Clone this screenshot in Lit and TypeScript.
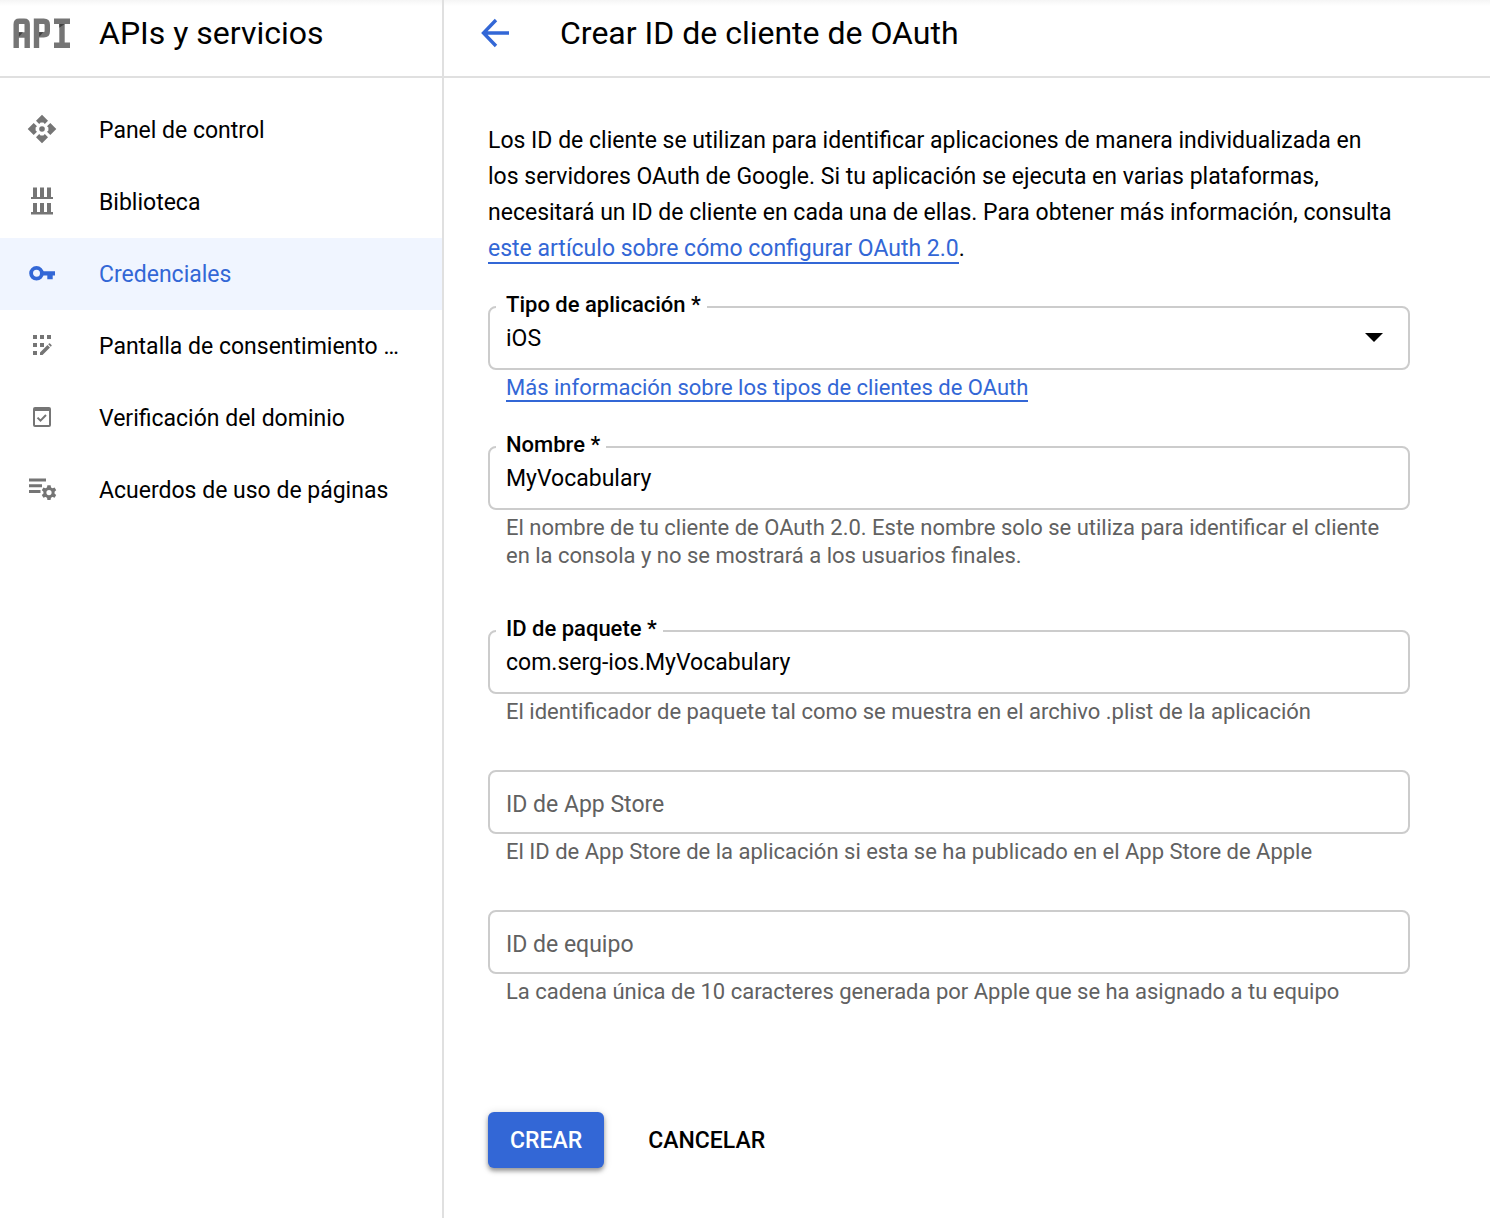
import { LitElement, html, svg, css, nothing, type TemplateResult } from "lit";
import { customElement, property } from "lit/decorators.js";
import { classMap } from "lit/directives/class-map.js";

const arm = "M16 .7L22 6.7L18.8 10L17.4 8.6H14.6L13.200 10L10 6.7Z";

const icons: Record<string, TemplateResult> = {
  dashboard: svg`
    ${[0, 90, 180, 270].map((a) => svg`<path d=${arm} transform="rotate(${a} 16 15)"/>`)}
    <circle cx="16" cy="15" r="2.8"/>`,
  library: svg`
    <path d="M7 1.5h4v9.5h-4zM14 1.5h4v9.5h-4zM21 1.5h4v9.5h-4zM5 11h22v2h-22z"/>
    <path d="M7 17h4v9h-4zM14 17h4v9h-4zM21 17h4v9h-4zM5 26h22v2.5h-22z"/>`,
  key: svg`
    <circle cx="10.5" cy="15.3" r="5.4" fill="none" stroke="currentColor" stroke-width="3.8"/>
    <path d="M16 13.2h13v4.2h-2.3v3.9h-5.4v-3.9h-5.3z"/>`,
  consent: svg`
    <path d="M7 5h4v4h-4zM14 5h4v4h-4zM21 5h4v4h-4zM7 13h4v4h-4zM14 13h4v4h-4zM7 21h4v4h-4z"/>
    <path d="M14 25v-2.5l7.5-7.5 2.5 2.5-7.5 7.5zM22.2 14.2l.8-.8q.5-.4 1 0l1.5 1.5q.4.5 0 1l-.8.8z"/>`,
  domain: svg`
    <path fill-rule="evenodd" d="M9 5h14a2 2 0 0 1 2 2v16a2 2 0 0 1-2 2h-14a2 2 0 0 1-2-2v-16a2 2 0 0 1 2-2zM9 9v14h14v-14z"/>
    <path d="M11.5 15.6l3 3 5.5-5.6" fill="none" stroke="currentColor" stroke-width="2"/>`,
  agreements: svg`
    <path d="M3 4.5h17v3h-17zM3 10.3h13v3h-13zM3 16h11.5v3h-11.5z"/>
    <circle cx="23" cy="18.6" r="4.1" fill="none" stroke="currentColor" stroke-width="3"/>
    ${[0, 60, 120, 180, 240, 300].map(
      (a) => svg`<path d="M20.8 14.6l.6-3.4h3.2l.6 3.4z" transform="rotate(${a} 23 18.6)"/>`
    )}`,
};

const navItems = [
  { icon: "dashboard", label: "Panel de control" },
  { icon: "library", label: "Biblioteca" },
  { icon: "key", label: "Credenciales", active: true },
  { icon: "consent", label: "Pantalla de consentimiento de OAuth" },
  { icon: "domain", label: "Verificación del dominio" },
  { icon: "agreements", label: "Acuerdos de uso de páginas" },
];

@customElement("form-field")
class FormField extends LitElement {
  @property() name = "";
  @property() label = "";
  @property() value = "";
  @property({ type: Boolean }) required = false;
  @property({ type: Array }) options: string[] = [];

  static styles = css`
    :host {
      display: block;
      font: 23px/36px Roboto, sans-serif;
      color: #000;
    }
    .box {
      position: relative;
      display: flex;
      height: 64px;
      box-sizing: border-box;
      border: 2px solid #ccc;
      border-radius: 8px;
    }
    .control {
      flex: 1;
      min-width: 0;
      margin: 0;
      padding: 2px 16px 0;
      border: 0;
      border-radius: 6px;
      outline: 0;
      appearance: none;
      background: transparent;
      font: inherit;
      color: inherit;
    }
    .box:focus-within {
      border-color: #3367d6;
    }
    .label {
      position: absolute;
      pointer-events: none;
    }
    .floating {
      left: 6px;
      top: -17px;
      padding: 0 6px 0 10px;
      background: #fff;
      font-size: 22px;
      line-height: 28px;
      font-weight: 500;
    }
    .resting {
      left: 16px;
      top: 15px;
      color: #616161;
    }
    .arrow {
      position: absolute;
      right: 24px;
      top: 24px;
      width: 20px;
      height: 12px;
      pointer-events: none;
    }
    .helper {
      margin: 4px 18px 0;
      font-size: 22px;
      line-height: 28px;
      color: #616161;
    }
  `;

  private onInput(e: Event) {
    this.value = (e.target as HTMLInputElement).value;
  }

  render() {
    const floating = this.value !== "";
    return html`
      <div class="box">
        ${this.options.length
          ? html`<select class="control" id="control" name=${this.name} @change=${this.onInput}>
                ${this.options.map((o) => html`<option ?selected=${o === this.value}>${o}</option>`)}
              </select>
              <svg class="arrow" viewBox="0 0 20 12" aria-hidden="true"><path d="M1 1h18l-9 9z" /></svg>`
          : html`<input
              class="control"
              id="control"
              type="text"
              name=${this.name}
              .value=${this.value}
              ?required=${this.required}
              @input=${this.onInput}
            />`}
        <label for="control" class=${classMap({ label: true, floating, resting: !floating })}
          >${this.label}${this.required ? " *" : nothing}</label
        >
      </div>
      <div class="helper"><slot></slot></div>
    `;
  }
}

@customElement("app-root")
class AppRoot extends LitElement {
  static styles = css`
    :host {
      display: block;
      font: 23px/36px Roboto, sans-serif;
      color: #000;
      background: #fff;
    }
    .layout {
      display: grid;
      grid-template-columns: 444px minmax(0, 1fr);
      grid-template-rows: 78px 1fr;
      min-height: 100vh;
      background: linear-gradient(#f5f5f5, #fff 6px);
    }
    .product,
    .toolbar {
      display: flex;
      align-items: center;
      box-sizing: border-box;
      padding-bottom: 10px;
      border-bottom: 2px solid #e0e0e0;
    }
    .product,
    .sidebar {
      border-right: 2px solid #e0e0e0;
    }
    .product {
      padding-left: 12px;
      gap: 27px;
    }
    .toolbar {
      padding-left: 36px;
      gap: 48px;
    }
    .title {
      margin: 0;
      font-size: 32px;
      line-height: 40px;
      font-weight: 400;
      white-space: nowrap;
    }
    .logo {
      width: 60px;
      height: 32px;
      color: #757575;
    }
    .back {
      display: flex;
      padding: 0;
      border: 0;
      background: none;
      color: #3367d6;
      cursor: pointer;
    }
    .icon {
      flex: none;
      width: 32px;
      height: 32px;
      fill: currentColor;
      color: #757575;
    }
    .back .icon {
      color: inherit;
    }
    .nav {
      display: flex;
      flex-direction: column;
      padding-top: 16px;
    }
    .item {
      display: flex;
      align-items: center;
      gap: 41px;
      height: 72px;
      padding: 0 36px 0 26px;
      color: inherit;
      text-decoration: none;
    }
    .item.active {
      background: #f0f5ff;
      color: #3367d6;
    }
    .item.active .icon {
      color: inherit;
    }
    .text {
      padding-top: 2px;
      overflow: hidden;
      text-overflow: ellipsis;
      white-space: nowrap;
    }
    .content {
      padding: 45px 80px 48px 44px;
    }
    .intro {
      margin: 0 0 39px;
    }
    .link {
      color: #3367d6;
      text-decoration: none;
      border-bottom: 2px solid currentColor;
    }
    .form {
      display: flex;
      flex-direction: column;
      gap: 44px;
    }
    .spaced {
      margin-bottom: 16px;
    }
    .actions {
      display: flex;
      padding-top: 62px;
    }
    .button {
      height: 56px;
      padding: 2px 22px 0;
      border: 0;
      border-radius: 6px;
      background: none;
      font: 500 23px/36px Roboto, sans-serif;
      color: #000;
      cursor: pointer;
    }
    .button + .button {
      margin-left: 22px;
    }
    .primary {
      background: #3367d6;
      color: #fff;
      box-shadow: 0 3px 4px rgba(0, 0, 0, 0.35), 0 1px 8px rgba(0, 0, 0, 0.15);
    }
  `;

  render() {
    return html`
      <div class="layout">
        <header class="product">
          <svg class="logo" viewBox="0 0 60 32" fill="none" stroke="currentColor" stroke-width="5.4" role="img" aria-label="API">
            <path d="M4.2 31V7.2q0-3 3-3h5q3 0 3 3v23.8M4.2 18h11" />
            <path d="M24.5 31V4.2h7.3q3.5 0 3.5 3.5v6.5q0 3.5-3.5 3.5h-7.3" />
            <path d="M42 4.2h16M50 4.2v24M42 28.2h16" />
            <path d="M6.9 15.3h4l-4 4.5zM27.2 15.3h4l-4 4.5zM47.3 6.9h5.4l-5.4 3.8z" fill="#424242" stroke="none" />
          </svg>
          <h2 class="title">APIs y servicios</h2>
        </header>
        <header class="toolbar">
          <button class="back" type="button" aria-label="Atrás">
            <svg class="icon" viewBox="0 0 32 32">
              <path d="M29 16H4M16 3L3.5 16L16 29" fill="none" stroke="currentColor" stroke-width="3.4" />
            </svg>
          </button>
          <h1 class="title">Crear ID de cliente de OAuth</h1>
        </header>
        <aside class="sidebar">
          <nav class="nav">
            ${navItems.map(
              (n) => html`<a class=${classMap({ item: true, active: !!n.active })} href="#">
                <svg class="icon" viewBox="0 0 32 32" aria-hidden="true">${icons[n.icon]}</svg>
                <span class="text">${n.label}</span>
              </a>`
            )}
          </nav>
        </aside>
        <main class="content">
          <p class="intro">
            Los ID de cliente se utilizan para identificar aplicaciones de manera individualizada en<br />
            los servidores OAuth de Google. Si tu aplicación se ejecuta en varias plataformas,<br />
            necesitará un ID de cliente en cada una de ellas. Para obtener más información, consulta<br />
            <a class="link" href="#">este artículo sobre cómo configurar OAuth 2.0</a>.
          </p>
          <form class="form" @submit=${(e: Event) => e.preventDefault()}>
            <form-field name="type" label="Tipo de aplicación" value="iOS" required .options=${["iOS", "Android", "Aplicación web"]}>
              <a class="link" href="#">Más información sobre los tipos de clientes de OAuth</a>
            </form-field>
            <form-field class="spaced" name="name" label="Nombre" value="MyVocabulary" required>
              El nombre de tu cliente de OAuth 2.0. Este nombre solo se utiliza para identificar el cliente en la
              consola y no se mostrará a los usuarios finales.
            </form-field>
            <form-field name="bundle" label="ID de paquete" value="com.serg-ios.MyVocabulary" required>
              El identificador de paquete tal como se muestra en el archivo .plist de la aplicación
            </form-field>
            <form-field name="store" label="ID de App Store">
              El ID de App Store de la aplicación si esta se ha publicado en el App Store de Apple
            </form-field>
            <form-field name="team" label="ID de equipo">
              La cadena única de 10 caracteres generada por Apple que se ha asignado a tu equipo
            </form-field>
            <div class="actions">
              <button class="button primary" type="submit">CREAR</button>
              <button class="button" type="button">CANCELAR</button>
            </div>
          </form>
        </main>
      </div>
    `;
  }
}
